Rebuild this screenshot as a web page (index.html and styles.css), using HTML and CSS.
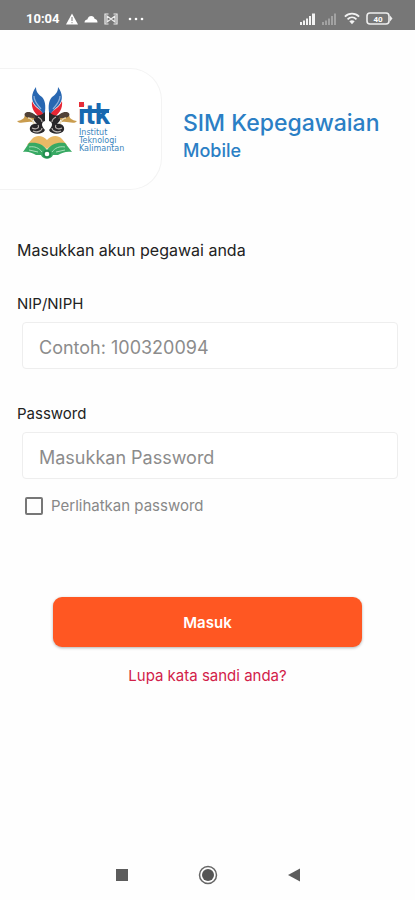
FILE: index.html
```html
<!DOCTYPE html>
<html lang="id">
<head>
    <meta charset="UTF-8">
    <meta name="viewport" content="width=device-width, initial-scale=1.0">
    <title>SIM Kepegawaian Mobile</title>
    <link rel="stylesheet" href="styles.css">
</head>
<body>
    <div class="status-bar">
        <div class="status-group">
            <span class="clock">10:04</span>
            <svg width="12" height="12" viewBox="0 0 12 12"><path d="M6 0.5L12 11.5H0z" fill="#fff"/><path d="M6 4v4M6 9.2v1" stroke="#777" stroke-width="1"/></svg>
            <svg width="14" height="12" viewBox="0 0 14 12"><path d="M0.5 9.5C0.5 7.5 2 6.5 3.3 6.5C4 4 5.500 3 7.200 3C9 3 10.300 4.200 10.700 6C12.500 6 13.500 7.500 13.500 9.500z" fill="#fff"/></svg>
            <svg width="14" height="12" viewBox="0 0 14 12" fill="none" stroke="#eee" stroke-width="1.200"><path d="M4.500 1H1v10h3.500M9.500 1H13v10H9.500M3 3l4 3 4-3v6L7 6 3 9z"/></svg>
            <svg class="more" width="16" height="12" viewBox="0 0 16 12" fill="#fff"><circle cx="2" cy="6" r="1.300"/><circle cx="8" cy="6" r="1.300"/><circle cx="14" cy="6" r="1.300"/></svg>
        </div>
        <div class="status-group">
            <svg width="16" height="12" viewBox="0 0 16 12" fill="#f2f2f2"><path d="M0 9h2v3H0zM3 7.500h2V12H3zM6 5.500h2V12H6zM9 3h2v9H9zM12 0.500h3V12h-3z"/></svg>
            <svg width="16" height="12" viewBox="0 0 16 12" fill="#a2a2a2"><path d="M0 9h2v3H0zM3 7.500h2V12H3zM6 5.500h2V12H6zM9 3h2v9H9zM12 0.500h2V12h-2z"/></svg>
            <svg width="16" height="13" viewBox="0 0 18 13" fill="none" stroke="#f2f2f2" stroke-width="2"><path d="M1 4.500C5.500 0 12.500 0 17 4.500M4 7.500C7 4.500 11 4.500 14 7.500"/><path d="M6 9.500Q9 7.500 12 9.500L9 13z" fill="#f2f2f2" stroke="none"/></svg>
            <svg width="27" height="13" viewBox="0 0 27 13"><rect x="1" y="1" width="22" height="11" rx="3" fill="none" stroke="#eee" stroke-width="1.600"/><path d="M24 3.500L26.500 6.500L24 9.500z" fill="#eee"/><text x="12" y="9.500" class="battery-text">40</text></svg>
        </div>
    </div>

    <header class="header">
        <div class="logo-card">
            <svg class="logo" width="112" height="76" viewBox="0 0 112 76" role="img" aria-label="Institut Teknologi Kalimantan">
                <g id="wing">
                    <path d="M19 2C14 9 14 15 18 20C22 24 26 27 27 32C29 24 29 16 25 12C21 9 19 7 19 2z" fill="#2867b2"/>
                    <path d="M17 11C17 17 21 20 24 24" stroke="#8cafd9" stroke-width="1.300" fill="none"/>
                    <path d="M15 16C14 24 18 29 25 34L27 31C26 25 18 24 15 16z" fill="#e72634"/>
                    <path d="M17 29C20 32 25 30 28 27V36C24 37 24 41 28 45C26 50 15 50 13 45C12 41 16 38 20 39C16 35 15 32 17 29z" fill="#29272a"/>
                    <path d="M15 43C19 45 23 43 21 40M16 46C20 48 25 46 25 43M21 32Q25 34 25 37" fill="none" stroke="#b9b3b0" stroke-width="1.100"/>
                    <path d="M0 36C3 40 9 36 15 37L18 32C13 26 8 28 7 33C5 35 2 36 0 36z" fill="#c99c4e"/>
                    <path d="M8 31C6 28 11 25 17 29L19 34C15 32 11 34 8 31z" fill="#514237"/>
                    <path d="M11 33C14 33 16 36 17 39" stroke="#e8d9b6" stroke-width="1.500" fill="none"/>
                </g>
                <use href="#wing" transform="matrix(-1 0 0 1 60 0)"/>
                <path d="M15 54C20 49 26 51 30 55C34 51 40 49 45 54L50 60C41 58 35 59 30 64C25 59 19 58 10 60z" fill="#e9b966"/>
                <path d="M12 58C20 57 26 59 30 65C34 59 40 57 48 58L55 67C49 66 45 68 41 70L36 70C34 75 26 75 24 70L19 70C15 68 11 66 6 67z" fill="#38a963"/>
                <path d="M12 62C18 61 22 63 25 67M48 62C42 61 38 63 35 67M12 65L21 67M48 65L39 67" stroke="#a8dfb9" stroke-width="1" fill="none"/>
                <circle cx="30" cy="69" r="3.300" fill="#fff" stroke="#238d50" stroke-width="2"/>
                <text class="logo-name" x="61" y="39">itk</text>
                <path d="M63 24H92v4H63z" fill="#1869b0"/>
                <path d="M62 17h5v5h-5z" fill="#e62c38"/>
                <text class="logo-text" x="62" y="50">Institut</text>
                <text class="logo-text" x="62" y="58">Teknologi</text>
                <text class="logo-text" x="62" y="66">Kalimantan</text>
            </svg>
        </div>
        <div class="titles">
            <h1>SIM Kepegawaian</h1>
            <p>Mobile</p>
        </div>
    </header>

    <main class="content">
        <form>
            <p class="intro">Masukkan akun pegawai anda</p>

            <div class="input-group">
                <label for="nip">NIP/NIPH</label>
                <input type="text" id="nip" placeholder="Contoh: 100320094">
            </div>

            <div class="input-group">
                <label for="password">Password</label>
                <input type="password" id="password" placeholder="Masukkan Password">
            </div>

            <div class="show-password">
                <input type="checkbox" id="show">
                <label for="show">Perlihatkan password</label>
            </div>

            <button type="submit">Masuk</button>
            <a class="forgot" href="#">Lupa kata sandi anda?</a>
        </form>
    </main>

    <nav class="nav-bar">
        <button type="button" aria-label="Recent">
            <svg width="20" height="20" viewBox="0 0 20 20"><path d="M4 4h12v12H4z" fill="#5c5c5c"/></svg>
        </button>
        <button type="button" aria-label="Home">
            <svg width="20" height="20" viewBox="0 0 20 20"><circle cx="10" cy="10" r="8.500" fill="none" stroke="#666" stroke-width="1.500"/><circle cx="10" cy="10" r="6" fill="#555"/></svg>
        </button>
        <button type="button" aria-label="Back">
            <svg width="20" height="20" viewBox="0 0 20 20"><path d="M4 10L16 3.500v13z" fill="#5c5c5c"/></svg>
        </button>
    </nav>
</body>
</html>
```

FILE: styles.css
```css
* {
    box-sizing: border-box;
}
body {
    display: flex;
    flex-direction: column;
    min-height: 100vh;
    margin: 0;
    background-color: #fefefe;
    font-family: Inter, sans-serif;
    color: #222;
}
h1, p {
    margin: 0;
    font-weight: normal;
}
svg {
    display: block;
}
.status-bar {
    display: flex;
    justify-content: space-between;
    height: 30px;
    padding: 8px 22px 0 26px;
    background-color: #777;
}
.status-group {
    display: flex;
    align-items: center;
    gap: 6px;
    height: 21px;
}
.clock {
    color: #fff;
    font-family: Roboto, sans-serif;
    font-size: 13px;
    font-weight: bold;
}
.more {
    margin-left: 4px;
}
.battery-text {
    fill: #fff;
    font-family: Roboto, sans-serif;
    font-size: 8px;
    font-weight: bold;
    text-anchor: middle;
}
.header {
    display: flex;
    align-items: center;
    gap: 21px;
    margin-top: 38px;
}
.logo-card {
    flex: none;
    padding: 16px 32px 28px 17px;
    background-color: #fff;
    border: 1px solid #f3f3f3;
    border-left: none;
    border-radius: 0 32px 32px 0;
}
.logo-name {
    fill: #1869b0;
    font-family: Roboto, sans-serif;
    font-size: 28px;
    font-weight: bold;
}
.logo-text {
    fill: #3c86bd;
    font-family: "DejaVu Sans", sans-serif;
    font-size: 8px;
}
.titles {
    padding-top: 12px;
    color: #2b7fc5;
}
.titles h1 {
    font-size: 23px;
    font-weight: 500;
    line-height: 32px;
}
.titles p {
    font-size: 18px;
    font-weight: 500;
    line-height: 24px;
}
.content {
    flex: 1;
    padding: 48px 17px 0;
}
.intro {
    font-size: 16px;
    line-height: 24px;
    margin-bottom: 32px;
}
.input-group {
    margin-bottom: 35px;
}
.input-group label {
    display: block;
    margin-bottom: 8px;
    font-size: 15px;
    line-height: 20px;
}
.input-group input {
    display: block;
    width: calc(100% - 5px);
    height: 47px;
    margin-left: 5px;
    padding: 4px 16px 0;
    background-color: #fff;
    border: 1px solid #eee;
    border-radius: 4px;
    font-family: inherit;
    font-size: 18px;
}
.input-group input::placeholder {
    color: #8c8c8c;
}
.show-password {
    display: flex;
    align-items: center;
    gap: 8px;
    margin: -20px 0 0 8px;
    color: #888;
    font-size: 15px;
    line-height: 24px;
}
.show-password input {
    appearance: none;
    width: 18px;
    height: 18px;
    margin: 0;
    border: 2px solid #777;
    border-radius: 2px;
}
.show-password input:checked {
    background-color: #777;
}
form > button {
    display: block;
    width: calc(100% - 72px);
    height: 50px;
    margin: 79px auto 0;
    border: none;
    border-radius: 9px;
    background-color: #ff5722;
    box-shadow: 0 1px 3px rgba(0,0,0,0.3);
    color: #fff;
    font-family: inherit;
    font-size: 15px;
    font-weight: 600;
}
.forgot {
    display: block;
    width: fit-content;
    margin: 17px auto 0;
    color: #d22149;
    font-size: 15px;
    line-height: 24px;
    text-decoration: none;
}
.nav-bar {
    display: flex;
    justify-content: center;
    gap: 66px;
    padding: 15px 0;
}
.nav-bar button {
    padding: 0;
    border: none;
    background: none;
}
```
